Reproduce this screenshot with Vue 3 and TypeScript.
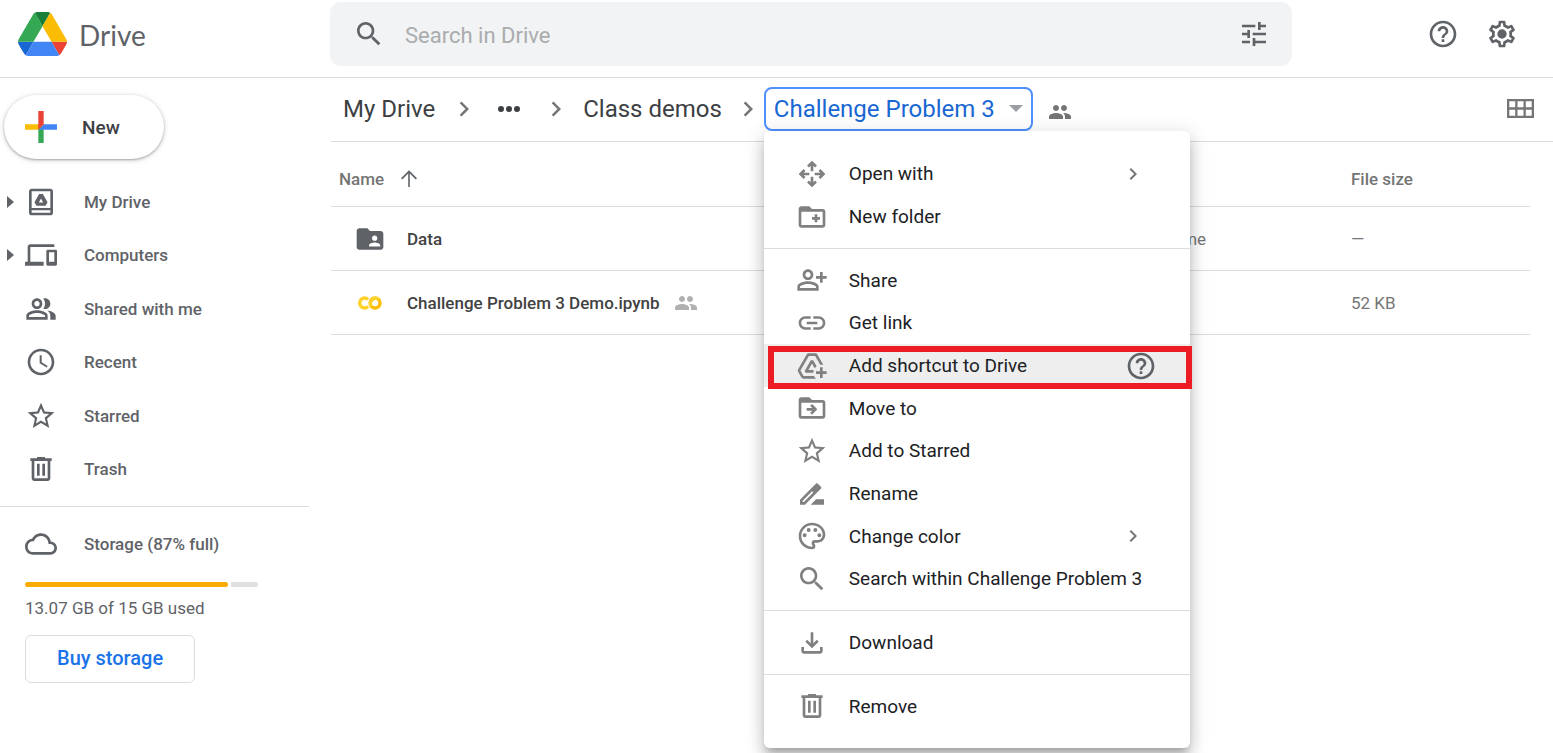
<script setup lang="ts">
import { ref } from 'vue'

const paths: Record<string, string> = {
  search:
    'M15.5 14h-.79l-.28-.27C15.41 12.59 16 11.11 16 9.5 16 5.91 13.09 3 9.5 3S3 5.91 3 9.5 5.91 16 9.5 16c1.61 0 3.09-.59 4.23-1.57l.27.28v.79l5 4.99L20.49 19l-4.99-5zm-6 0C7.01 14 5 11.99 5 9.5S7.01 5 9.5 5 14 7.01 14 9.5 11.99 14 9.5 14z',
  tune: 'M3 17v2h6v-2H3zM3 5v2h10V5H3zm10 16v-2h8v-2h-8v-2h-2v6h2zM7 9v2H3v2h4v2h2V9H7zm14 4v-2H11v2h10zm-6-4h2V7h4V5h-4V3h-2v6z',
  help: 'M11 18h2v-2h-2v2zm1-16C6.48 2 2 6.48 2 12s4.48 10 10 10 10-4.48 10-10S17.52 2 12 2zm0 18c-4.41 0-8-3.59-8-8s3.59-8 8-8 8 3.59 8 8-3.59 8-8 8zm0-14c-2.21 0-4 1.79-4 4h2c0-1.1.9-2 2-2s2 .9 2 2c0 2-3 1.75-3 5h2c0-2.25 3-2.5 3-5 0-2.21-1.79-4-4-4z',
  settings:
    'M19.43 12.98c.04-.32.07-.64.07-.98 0-.34-.03-.66-.07-.98l2.11-1.65c.19-.15.24-.42.12-.64l-2-3.46c-.09-.16-.26-.25-.44-.25-.06 0-.12.01-.17.03l-2.49 1c-.52-.4-1.08-.73-1.69-.98l-.38-2.65C14.46 2.18 14.25 2 14 2h-4c-.25 0-.46.18-.49.42l-.38 2.65c-.61.25-1.17.59-1.69.98l-2.49-1c-.06-.02-.12-.03-.18-.03-.17 0-.34.09-.43.25l-2 3.46c-.13.22-.07.49.12.64l2.11 1.65c-.04.32-.07.65-.07.98 0 .33.03.66.07.98l-2.11 1.65c-.19.15-.24.42-.12.64l2 3.46c.09.16.26.25.44.25.06 0 .12-.01.17-.03l2.49-1c.52.4 1.08.73 1.69.98l.38 2.65c.03.24.24.42.49.42h4c.25 0 .46-.18.49-.42l.38-2.65c.61-.25 1.17-.59 1.69-.98l2.49 1c.06.02.12.03.18.03.17 0 .34-.09.43-.25l2-3.46c.12-.22.07-.49-.12-.64l-2.11-1.65zm-1.98-1.71c.04.31.05.52.05.73 0 .21-.02.43-.05.73l-.14 1.13.89.7 1.08.84-.7 1.21-1.27-.51-1.04-.42-.9.68c-.43.32-.84.56-1.25.73l-1.06.43-.16 1.13-.2 1.35h-1.4l-.19-1.35-.16-1.13-1.06-.43c-.43-.18-.83-.41-1.23-.71l-.91-.7-1.06.43-1.27.51-.7-1.21 1.08-.84.89-.7-.14-1.13c-.03-.31-.05-.54-.05-.74s.02-.43.05-.73l.14-1.13-.89-.7-1.08-.84.7-1.21 1.27.51 1.04.42.9-.68c.43-.32.84-.56 1.25-.73l1.06-.43.16-1.13.2-1.35h1.39l.19 1.35.16 1.13 1.06.43c.43.18.83.41 1.23.71l.91.7 1.06-.43 1.27-.51.7 1.21-1.07.85-.89.7.14 1.13zM12 8.5a3.5 3.5 0 1 0 0 7 3.5 3.5 0 0 0 0-7z',
  mydrive:
    'M5 2h14c1.1 0 2 .9 2 2v16c0 1.1-.9 2-2 2H5c-1.1 0-2-.9-2-2V4c0-1.1.9-2 2-2zM5 4v12.5h14V4H5zm0 14.2V20h14v-1.8H5zM10.6 6h2.8l3.5 6.2-1.5 2.6H8.6L7.1 12.2zM12 9.3l-1.6 3h3.2z',
  devices:
    'M4 6h18V4H4c-1.1 0-2 .9-2 2v11H0v3h14v-3H4V6zm19 2h-6c-.55 0-1 .45-1 1v10c0 .55.45 1 1 1h6c.55 0 1-.45 1-1V9c0-.55-.45-1-1-1zm-1 9h-4v-7h4v7z',
  shared:
    'M16.67 13.13C18.04 14.06 19 15.32 19 17v3h4v-3c0-2.18-3.57-3.47-6.33-3.87zM15 12c2.21 0 4-1.79 4-4s-1.79-4-4-4c-.47 0-.91.1-1.33.24C14.5 5.27 15 6.58 15 8s-.5 2.73-1.33 3.76c.42.14.86.24 1.33.24zM9 12c2.21 0 4-1.79 4-4s-1.79-4-4-4-4 1.79-4 4 1.79 4 4 4zm0-6c1.1 0 2 .9 2 2s-.9 2-2 2-2-.9-2-2 .9-2 2-2zM9 13c-2.67 0-8 1.34-8 4v3h16v-3c0-2.66-5.33-4-8-4zm6 5H3v-.99C3.2 16.29 6.3 15 9 15s5.8 1.29 6 2v1z',
  clock:
    'M11.99 2C6.47 2 2 6.48 2 12s4.47 10 9.99 10C17.52 22 22 17.52 22 12S17.52 2 11.99 2zM12 20c-4.42 0-8-3.58-8-8s3.58-8 8-8 8 3.58 8 8-3.58 8-8 8zM12.5 7H11v6l5.25 3.15.75-1.23-4.5-2.67z',
  star: 'M22 9.24l-7.19-.62L12 2 9.19 8.63 2 9.24l5.46 4.73L5.82 21 12 17.27 18.18 21l-1.63-7.03L22 9.24zM12 15.4l-3.76 2.27 1-4.28-3.32-2.88 4.38-.38L12 6.1l1.71 4.04 4.38.38-3.32 2.88 1 4.28L12 15.4z',
  trash:
    'M15 4V3H9v1H4v2h1v13c0 1.1.9 2 2 2h10c1.1 0 2-.9 2-2V6h1V4h-5zm2 15H7V6h10v13zM9 8h2v9H9zM13 8h2v9h-2z',
  cloud:
    'M19.35 10.04C18.67 6.59 15.64 4 12 4 9.11 4 6.6 5.64 5.35 8.04 2.34 8.36 0 10.91 0 14c0 3.31 2.69 6 6 6h13c2.76 0 5-2.24 5-5 0-2.64-2.05-4.78-4.65-4.96zM19 18H6c-2.21 0-4-1.79-4-4 0-2.05 1.53-3.76 3.56-3.97l1.07-.11.5-.95C8.08 7.14 9.94 6 12 6c2.62 0 4.88 1.86 5.39 4.43l.3 1.5 1.53.11c1.56.1 2.78 1.41 2.78 2.96 0 1.65-1.35 3-3 3z',
  folderShared:
    'M20 6h-8l-2-2H4c-1.1 0-1.99.9-1.99 2L2 18c0 1.1.9 2 2 2h16c1.1 0 2-.9 2-2V8c0-1.1-.9-2-2-2zm-4.5 3.4c1.1 0 2 .9 2 2s-.9 2-2 2-2-.9-2-2 .9-2 2-2zm4.2 8.2h-8.4v-.9c0-1.4 2.8-2.1 4.2-2.1s4.2.7 4.2 2.1z',
  people:
    'M16 11c1.66 0 2.99-1.34 2.99-3S17.66 5 16 5c-1.66 0-3 1.34-3 3s1.34 3 3 3zm-8 0c1.66 0 2.99-1.34 2.99-3S9.66 5 8 5C6.34 5 5 6.34 5 8s1.34 3 3 3zm0 2c-2.33 0-7 1.17-7 3.5V19h14v-2.5c0-2.33-4.67-3.5-7-3.5zm8 0c-.29 0-.62.02-.97.05 1.16.84 1.97 1.97 1.97 3.45V19h6v-2.5c0-2.33-4.67-3.5-7-3.5z',
  openWith:
    'M12 2l3.7 3.7-1.4 1.4L13 5.8V10h-2V5.8L9.7 7.1 8.3 5.7zM12 22l-3.7-3.7 1.4-1.4 1.3 1.3V14h2v4.2l1.3-1.3 1.4 1.4zM2 12l3.7-3.7 1.4 1.4L5.8 11H10v2H5.8l1.3 1.3-1.4 1.4zM22 12l-3.7 3.7-1.4-1.4 1.3-1.3H14v-2h4.2l-1.3-1.3 1.4-1.4z',
  newFolder:
    'M20 6h-8l-2-2H4c-1.11 0-1.99.89-1.99 2L2 18c0 1.11.89 2 2 2h16c1.11 0 2-.89 2-2V8c0-1.11-.89-2-2-2zm0 12H4V8h16v10zM14 10h2v2h2v2h-2v2h-2v-2h-2v-2h2z',
  share:
    'M9 12c2.21 0 4-1.79 4-4s-1.79-4-4-4-4 1.79-4 4 1.79 4 4 4zm0-6c1.1 0 2 .9 2 2s-.9 2-2 2-2-.9-2-2 .9-2 2-2zM9 13c-2.67 0-8 1.34-8 4v3h16v-3c0-2.66-5.33-4-8-4zm6 5H3v-.99C3.2 16.29 6.3 15 9 15s5.8 1.29 6 2v1zM20 9V6h-2v3h-3v2h3v3h2v-3h3V9z',
  link: 'M3.9 12c0-1.71 1.39-3.1 3.1-3.1h4V7H7c-2.76 0-5 2.24-5 5s2.24 5 5 5h4v-1.9H7c-1.71 0-3.1-1.39-3.1-3.1zM8 13h8v-2H8v2zm9-6h-4v1.9h4c1.71 0 3.1 1.39 3.1 3.1s-1.39 3.1-3.1 3.1h-4V17h4c2.76 0 5-2.24 5-5s-2.24-5-5-5z',
  addToDrive:
    'M20 21v-3h3v-2h-3v-3h-2v3h-3v2h3v3h2zM15.03 21.5H5.66c-.72 0-1.38-.38-1.73-1L1.57 16.4c-.36-.62-.35-1.38.01-2L7.92 3.49C8.28 2.88 8.94 2.5 9.65 2.5h4.7c.71 0 1.37.38 1.73.99l4.48 7.71C20.06 11.07 19.54 11 19 11c-.28 0-.56.02-.84.06L14.35 4.5h-4.7L3.31 15.41l2.35 4.09h7.89c.35.77.85 1.45 1.48 2zM13.34 15c-.22.63-.34 1.3-.34 2H7.25l-.73-1.27 4.58-7.98h1.8l2.53 4.42c-.56.42-1.05.93-1.44 1.51l-2-3.49L9.25 15h4.09z',
  move: 'M20 6h-8l-2-2H4c-1.11 0-1.99.89-1.99 2L2 18c0 1.11.89 2 2 2h16c1.11 0 2-.89 2-2V8c0-1.11-.89-2-2-2zm0 12H4V8h16v10zM8 12h4.2l-1.6-1.6L12 9l4 4-4 4-1.4-1.4 1.6-1.6H8z',
  rename:
    'M15 16l-4 4h10v-4zM12.06 7.19L3 16.25V20h3.75l9.06-9.06zM5.92 18H5v-.92l7.06-7.06.92.92zM18.71 8.04c.39-.39.39-1.02 0-1.41l-2.34-2.34c-.2-.2-.45-.29-.71-.29-.25 0-.51.1-.7.29l-2.9 2.9 3.75 3.75z',
  palette:
    'M12 22C6.49 22 2 17.51 2 12S6.49 2 12 2s10 4.04 10 9c0 3.31-2.69 6-6 6h-1.77c-.28 0-.5.22-.5.5 0 .12.05.23.13.33.41.47.64 1.06.64 1.67A2.5 2.5 0 0 1 12 22zm0-18c-4.41 0-8 3.59-8 8s3.59 8 8 8c.28 0 .5-.22.5-.5a.54.54 0 0 0-.14-.35c-.41-.46-.63-1.05-.63-1.65a2.5 2.5 0 0 1 2.5-2.5H16c2.21 0 4-1.79 4-4 0-3.86-3.59-7-8-7zM6.5 10a1.5 1.5 0 1 0 0 3 1.5 1.5 0 0 0 0-3zM9.5 6a1.5 1.5 0 1 0 0 3 1.5 1.5 0 0 0 0-3zM14.5 6a1.5 1.5 0 1 0 0 3 1.5 1.5 0 0 0 0-3zM17.5 10a1.5 1.5 0 1 0 0 3 1.5 1.5 0 0 0 0-3z',
  download:
    'M4 15v3c0 1.1.9 2 2 2h12c1.1 0 2-.9 2-2v-3h-2v3H6v-3H4zM11 4v8.17L8.41 9.59 7 11l5 5 5-5-1.41-1.41L13 12.17V4z',
  chevron: 'M10 6L8.59 7.41 13.17 12l-4.58 4.59L10 18l6-6z',
  arrowUp: 'M11.2 20V6.6l-5.9 5.9L4 11.2 12 3.2l8 8-1.3 1.3-5.9-5.9V20z',
}

interface NavItem {
  label: string
  icon: string
  expandable?: boolean
}

const navItems: NavItem[] = [
  { label: 'My Drive', icon: 'mydrive', expandable: true },
  { label: 'Computers', icon: 'devices', expandable: true },
  { label: 'Shared with me', icon: 'shared' },
  { label: 'Recent', icon: 'clock' },
  { label: 'Starred', icon: 'star' },
  { label: 'Trash', icon: 'trash' },
]

interface FileRow {
  name: string
  kind: 'folder' | 'notebook'
  shared: boolean
  modified: string
  size: string
}

const files: FileRow[] = [
  { name: 'Data', kind: 'folder', shared: false, modified: 'Jul 18, 2021 me', size: '—' },
  { name: 'Challenge Problem 3 Demo.ipynb', kind: 'notebook', shared: true, modified: 'Jul 9, 2021', size: '52 KB' },
]

interface MenuEntry {
  label?: string
  icon?: string
  submenu?: boolean
  help?: boolean
}

const menu: MenuEntry[] = [
  { label: 'Open with', icon: 'openWith', submenu: true },
  { label: 'New folder', icon: 'newFolder' },
  {},
  { label: 'Share', icon: 'share' },
  { label: 'Get link', icon: 'link' },
  { label: 'Add shortcut to Drive', icon: 'addToDrive', help: true },
  { label: 'Move to', icon: 'move' },
  { label: 'Add to Starred', icon: 'star' },
  { label: 'Rename', icon: 'rename' },
  { label: 'Change color', icon: 'palette', submenu: true },
  { label: 'Search within Challenge Problem 3', icon: 'search' },
  {},
  { label: 'Download', icon: 'download' },
  {},
  { label: 'Remove', icon: 'trash' },
]

const highlighted = 'Add shortcut to Drive'
const query = ref('')
const usedPercent = 87
</script>

<template>
  <div class="page">
    <header class="topbar">
      <a class="brand" href="#">
        <svg class="logo" viewBox="0 0 87.3 78" aria-hidden="true">
          <path fill="#1967d2" d="m6.6 66.85 3.85 6.65c.8 1.4 1.95 2.5 3.3 3.3l13.75-23.8h-27.5c0 1.55.4 3.1 1.2 4.5z" />
          <path fill="#34a853" d="m43.65 25-13.75-23.8c-1.35.8-2.5 1.9-3.3 3.3l-25.4 44a9.06 9.06 0 0 0-1.2 4.5h27.5z" />
          <path fill="#ea4335" d="m73.55 76.8c1.35-.8 2.5-1.9 3.3-3.3l1.6-2.75 7.65-13.25c.8-1.4 1.2-2.95 1.2-4.5h-27.502z" />
          <path fill="#188038" d="m43.65 25 13.75-23.8c-1.35-.8-2.9-1.2-4.5-1.2h-18.5c-1.6 0-3.15.45-4.5 1.2z" />
          <path fill="#4285f4" d="m59.8 53h-32.3l-13.75 23.8c1.35.8 2.9 1.2 4.5 1.2h50.8c1.6 0 3.15-.45 4.5-1.2z" />
          <path fill="#fbbc04" d="m73.4 26.5-12.7-22c-.8-1.4-1.95-2.5-3.3-3.3l-13.75 23.8 16.15 28h27.45c0-1.55-.4-3.1-1.2-4.5z" />
        </svg>
        <span>Drive</span>
      </a>
      <form class="search" role="search" @submit.prevent>
        <button type="submit" aria-label="Search">
          <svg class="icon" viewBox="0 0 24 24"><path :d="paths.search" /></svg>
        </button>
        <input v-model="query" type="text" placeholder="Search in Drive" aria-label="Search in Drive" />
        <button type="button" aria-label="Search options">
          <svg class="icon" viewBox="0 0 24 24"><path :d="paths.tune" /></svg>
        </button>
      </form>
      <div class="actions">
        <button type="button" aria-label="Support">
          <svg class="icon" viewBox="0 0 24 24"><path :d="paths.help" /></svg>
        </button>
        <button type="button" aria-label="Settings">
          <svg class="icon" viewBox="0 0 24 24"><path :d="paths.settings" /></svg>
        </button>
      </div>
    </header>

    <div class="body">
      <aside class="sidebar">
        <button class="new" type="button">
          <svg class="plus" viewBox="6 6 24 24" aria-hidden="true">
            <path fill="#34a853" d="M16 16v14h4V20z" />
            <path fill="#4285f4" d="M30 16H20l-4 4h14z" />
            <path fill="#fbbc04" d="M6 16v4h10l4-4z" />
            <path fill="#ea4335" d="M20 16V6h-4v14z" />
          </svg>
          <span>New</span>
        </button>
        <nav class="nav">
          <a v-for="item in navItems" :key="item.label" href="#" class="nav-item">
            <span class="expander" :class="{ visible: item.expandable }"></span>
            <svg class="icon" viewBox="0 0 24 24"><path :d="paths[item.icon]" /></svg>
            <span class="nav-label">{{ item.label }}</span>
          </a>
        </nav>
        <section class="storage">
          <a href="#" class="storage-link">
            <svg class="icon" viewBox="0 0 24 24"><path :d="paths.cloud" /></svg>
            <span class="nav-label">Storage ({{ usedPercent }}% full)</span>
          </a>
          <div
            class="meter"
            role="progressbar"
            aria-label="Storage used"
            :aria-valuenow="usedPercent"
            aria-valuemin="0"
            aria-valuemax="100"
          >
            <span class="meter-used" :style="{ width: usedPercent + '%' }"></span>
            <span class="meter-free"></span>
          </div>
          <p class="usage">13.07 GB of 15 GB used</p>
          <button class="buy" type="button">Buy storage</button>
        </section>
      </aside>

      <main class="content">
        <div class="toolbar">
          <nav class="crumbs" aria-label="Folder path">
            <a href="#">My Drive</a>
            <svg class="crumb-chevron" viewBox="0 0 24 24"><path :d="paths.chevron" /></svg>
            <button class="dots" type="button" aria-label="Show path">
              <svg viewBox="0 0 22 6"><circle cx="3" cy="3" r="3" /><circle cx="11" cy="3" r="3" /><circle cx="19" cy="3" r="3" /></svg>
            </button>
            <svg class="crumb-chevron" viewBox="0 0 24 24"><path :d="paths.chevron" /></svg>
            <a href="#">Class demos</a>
            <svg class="crumb-chevron last" viewBox="0 0 24 24"><path :d="paths.chevron" /></svg>
            <div class="current-wrap">
              <button class="current" type="button" aria-haspopup="menu" aria-expanded="true">
                <span>Challenge Problem 3</span>
                <span class="caret"></span>
              </button>
              <div class="menu" role="menu">
                <template v-for="(entry, i) in menu" :key="i">
                  <hr v-if="!entry.label" />
                  <button
                    v-else
                    type="button"
                    role="menuitem"
                    class="menu-item"
                    :class="{ active: entry.label === highlighted }"
                  >
                    <svg class="icon" viewBox="0 0 24 24"><path :d="paths[entry.icon!]" /></svg>
                    <span class="menu-label">{{ entry.label }}</span>
                    <svg v-if="entry.submenu" class="submenu" viewBox="0 0 24 24"><path :d="paths.chevron" /></svg>
                    <svg v-if="entry.help" class="icon item-help" viewBox="0 0 24 24"><path :d="paths.help" /></svg>
                    <span v-if="entry.label === highlighted" class="marker"></span>
                  </button>
                </template>
              </div>
            </div>
            <svg class="people" viewBox="0 0 24 24"><path :d="paths.people" /></svg>
          </nav>
          <button class="view" type="button" aria-label="Grid view">
            <svg viewBox="0 0 27 19">
              <path
                d="M0 0h27v19H0zM2.3 2.3v6h5.9v-6zM10.5 2.3v6h6v-6zM18.8 2.3v6h5.9v-6zM2.3 10.7v6h5.9v-6zM10.5 10.7v6h6v-6zM18.8 10.7v6h5.9v-6z"
              />
            </svg>
          </button>
        </div>

        <table class="files">
          <colgroup>
            <col />
            <col class="col-modified" />
            <col class="col-size" />
          </colgroup>
          <thead>
            <tr>
              <th scope="col">
                <span class="sort">Name<svg viewBox="0 0 24 24"><path :d="paths.arrowUp" /></svg></span>
              </th>
              <th scope="col">Last modified</th>
              <th scope="col">File size</th>
            </tr>
          </thead>
          <tbody>
            <tr v-for="file in files" :key="file.name">
              <td>
                <span class="file">
                  <svg v-if="file.kind === 'folder'" class="icon" viewBox="0 0 24 24"><path :d="paths.folderShared" /></svg>
                  <svg v-else class="icon colab" viewBox="0 0 24 24">
                    <path d="M10.6 9.4a3.7 3.7 0 1 0 0 5.2" stroke="#fdd22b" />
                    <circle cx="15.8" cy="12" r="3.7" stroke="#fbbc04" />
                    <path d="M13.2 14.6a3.7 3.7 0 0 1 5.2-5.2" stroke="#fdd22b" />
                  </svg>
                  <span class="file-name">{{ file.name }}</span>
                  <svg v-if="file.shared" class="people light" viewBox="0 0 24 24"><path :d="paths.people" /></svg>
                </span>
              </td>
              <td>{{ file.modified }}</td>
              <td>{{ file.size }}</td>
            </tr>
          </tbody>
        </table>
      </main>
    </div>
  </div>
</template>

<style>
body {
  background: #fff;
}
</style>

<style scoped>
.page {
  height: 100vh;
  overflow: hidden;
  display: flex;
  flex-direction: column;
  font-family: Roboto, 'Liberation Sans', sans-serif;
  font-size: 17px;
  color: #5f6368;
  background: #fff;
}

.page *,
.page {
  box-sizing: border-box;
}

button {
  margin: 0;
  padding: 0;
  border: 0;
  background: none;
  font: inherit;
  color: inherit;
  cursor: pointer;
}

a {
  color: inherit;
  text-decoration: none;
}

svg {
  display: block;
  flex: none;
  fill: currentColor;
  fill-rule: evenodd;
}

.icon {
  width: 32px;
  height: 32px;
}

.topbar {
  display: grid;
  grid-template-columns: 330px minmax(0, 1fr) 261px;
  align-items: start;
  height: 78px;
  padding-top: 2px;
  border-bottom: 1px solid #dadce0;
}

.brand {
  display: flex;
  align-items: center;
  gap: 12px;
  height: 64px;
  padding-left: 18px;
  font-family: Lato, sans-serif;
  font-size: 28px;
}

.brand span {
  padding-top: 2px;
}

.logo {
  width: 49px;
  height: 44px;
}

.search {
  display: flex;
  align-items: center;
  height: 64px;
  padding: 0 22px 0 23px;
  border-radius: 11px;
  background: #f1f3f4;
}

.search input {
  flex: 1;
  min-width: 0;
  height: 40px;
  margin: 0 20px;
  padding: 2px 0 0;
  border: 0;
  outline: 0;
  background: none;
  font-family: inherit;
  font-size: 22px;
  color: #3c4043;
}

.search input::placeholder {
  color: #aaacae;
  opacity: 1;
}

.actions {
  display: flex;
  justify-content: flex-end;
  align-items: center;
  gap: 27px;
  height: 64px;
  padding-right: 35px;
}

.body {
  flex: 1;
  min-height: 0;
  display: grid;
  grid-template-columns: 309px minmax(0, 1fr);
  column-gap: 22px;
}

.sidebar {
  padding-top: 17px;
}

.new {
  display: flex;
  align-items: center;
  gap: 25px;
  height: 64px;
  margin-left: 4px;
  padding: 0 44px 0 21px;
  border-radius: 32px;
  background: #fff;
  box-shadow: 0 1px 2px rgba(60, 64, 67, 0.35), 0 1px 4px 1px rgba(60, 64, 67, 0.18);
  font-size: 19px;
  font-weight: 500;
  color: #3c4043;
}

.plus {
  width: 32px;
  height: 32px;
}

.nav {
  display: grid;
  grid-auto-rows: 1fr;
  min-height: 321px;
  margin: 16px 0 10px;
}

.nav-item {
  display: flex;
  align-items: center;
  padding-left: 7px;
}

.expander {
  width: 18px;
}

.expander.visible::before {
  content: '';
  display: block;
  width: 0;
  border-left: 7px solid #5f6368;
  border-top: 6px solid transparent;
  border-bottom: 6px solid transparent;
}

.nav-label {
  margin-left: 27px;
  font-weight: 500;
}

.storage {
  padding: 21px 51px 0 25px;
  border-top: 1px solid #dadce0;
}

.storage-link {
  display: flex;
  align-items: center;
}

.meter {
  display: flex;
  gap: 3px;
  height: 5px;
  margin-top: 22px;
}

.meter-used {
  border-radius: 3px;
  background: #f9ab00;
}

.meter-free {
  flex: 1;
  border-radius: 1px 3px 3px 1px;
  background: #e0e0e0;
}

.usage {
  margin: 9px 0 15px;
  line-height: 24px;
}

.buy {
  height: 48px;
  padding: 0 31px 2px;
  border: 1px solid #dadce0;
  border-radius: 6px;
  font-size: 20px;
  font-weight: 500;
  color: #1a73e8;
}

.toolbar {
  display: flex;
  align-items: center;
  justify-content: space-between;
  height: 64px;
  padding: 0 19px 2px 12px;
  border-bottom: 1px solid #dadce0;
}

.crumbs {
  display: flex;
  align-items: center;
  font-size: 24px;
  white-space: nowrap;
  color: #3c4043;
}

.crumb-chevron {
  width: 30px;
  height: 30px;
  margin: 0 12px 0 14px;
  color: #757575;
}

.crumb-chevron.last {
  margin: 0 1px 0 11px;
}

.dots {
  padding: 10px 7px;
}

.dots svg {
  width: 22px;
  height: 6px;
}

.current-wrap {
  position: relative;
}

.current {
  display: flex;
  align-items: center;
  gap: 14px;
  height: 44px;
  padding: 0 8px;
  border: 2px solid #4d90fe;
  border-radius: 8px;
  color: #1967d2;
}

.caret {
  border-top: 7px solid #9a9da1;
  border-left: 7px solid transparent;
  border-right: 7px solid transparent;
}

.people {
  width: 24px;
  height: 24px;
  margin-left: 15px;
  color: #757575;
}

.crumbs .people {
  margin-top: 6px;
}

.people.light {
  margin-left: 14px;
  color: #b0b0b0;
}

.view svg {
  width: 27px;
  height: 19px;
  color: #757575;
}

.menu {
  position: absolute;
  top: 100%;
  left: 0;
  z-index: 2;
  display: flex;
  flex-direction: column;
  width: 426px;
  min-height: 617px;
  padding: 22px 0 20px;
  border-radius: 6px;
  background: #fff;
  box-shadow: 0 10px 13px 1px rgba(0, 0, 0, 0.14), 0 4px 19px 3px rgba(0, 0, 0, 0.12),
    0 7px 7px -4px rgba(0, 0, 0, 0.2);
  font-size: 19px;
  color: #202124;
}

.menu hr {
  width: 100%;
  margin: 10px 0;
  border: 0;
  border-top: 1px solid #dadce0;
}

.menu-item {
  position: relative;
  flex: 1;
  display: flex;
  align-items: center;
  padding: 0 32px;
  text-align: left;
}

.menu-item .icon {
  color: #808080;
}

.menu-label {
  flex: 1;
  margin-left: 21px;
}

.submenu {
  width: 24px;
  height: 24px;
  margin-right: 13px;
  color: #757575;
}

.menu-item.active {
  background: #eee;
}

.menu-item .item-help {
  margin-right: 1px;
  color: #5f6368;
}

.marker {
  position: absolute;
  inset: 2px -2px -2px 4px;
  border: 6px solid #ed1c24;
}

.files {
  width: calc(100% - 23px);
  border-spacing: 0;
  table-layout: fixed;
}

.col-modified {
  width: 265px;
}

.col-size {
  width: 179px;
}

.files th,
.files td {
  height: 64px;
  padding: 0;
  border-bottom: 1px solid #dadce0;
  text-align: left;
  font-weight: 400;
  color: #757575;
}

.files th {
  height: 65px;
  padding-top: 10px;
  font-weight: 500;
}

.sort {
  display: flex;
  align-items: center;
  gap: 13px;
  padding-left: 8px;
}

.sort svg {
  width: 24px;
  height: 24px;
  color: #5f6368;
}

.file {
  display: flex;
  align-items: center;
  padding-left: 23px;
}

.file .icon {
  color: #5f6368;
}

.file .colab {
  fill: none;
  stroke-width: 2.6;
}

.file-name {
  margin-left: 21px;
  font-weight: 500;
  color: #424242;
}
</style>
